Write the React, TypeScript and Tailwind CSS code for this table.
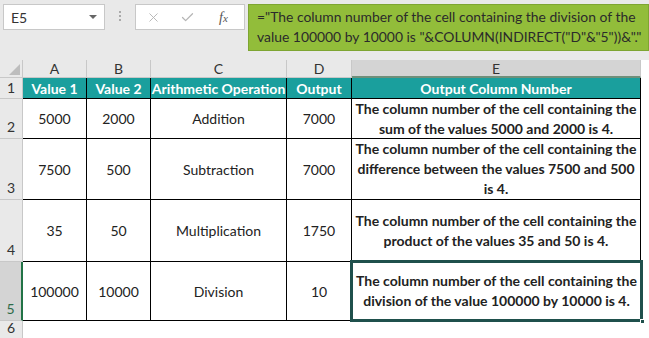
import { Check, X } from 'lucide-react'

const rows = [
  { n: '2', h: 'h-[40px]', a: '5000', b: '2000', op: 'Addition', out: '7000', text: ['The column number of the cell containing the', 'sum of the values 5000 and 2000 is 4.'] },
  { n: '3', h: 'h-[61px]', a: '7500', b: '500', op: 'Subtraction', out: '7000', text: ['The column number of the cell containing the', 'difference between the values 7500 and 500', 'is 4.'] },
  { n: '4', h: 'h-[62px]', a: '35', b: '50', op: 'Multiplication', out: '1750', text: ['The column number of the cell containing the', 'product of the values 35 and 50 is 4.'] },
  { n: '5', h: 'h-[59px]', a: '100000', b: '10000', op: 'Division', out: '10', text: ['The column number of the cell containing the', 'division of the value 100000 by 10000 is 4.'], selected: true },
]

const cols = ['A', 'B', 'C', 'D', 'E']
const widths = ['w-[64px]', 'w-[64px]', 'w-[136px]', 'w-[65px]', 'w-[289px]']

export default function App() {
  return (
    <div className="w-[649px] h-[338px] overflow-hidden bg-white text-[#222] font-['Lato','Noto_Sans',sans-serif]">
      {/* Formula bar */}
      <div className="h-[60px] bg-[#e9e9e9] relative">
        <div className="absolute left-[3px] top-[4px] w-[102px] h-[26px] bg-white border border-[#c8c8c8] flex items-center justify-between px-[7px]">
          <span className="text-[14px] text-[#333]">E5</span>
          <span className="w-0 h-0 border-l-[4px] border-r-[4px] border-t-[4px] border-l-transparent border-r-transparent border-t-[#666]" />
        </div>
        <div className="absolute left-[119px] top-[11px] flex flex-col gap-[2px]">
          <span className="w-[2px] h-[2px] bg-[#aaa]" />
          <span className="w-[2px] h-[2px] bg-[#aaa]" />
          <span className="w-[2px] h-[2px] bg-[#aaa]" />
        </div>
        <div className="absolute left-[135px] top-[4px] w-[110px] h-[26px] bg-white border border-[#c8c8c8] flex items-center px-[10px] gap-[19px]">
          <X className="w-[15px] h-[15px] text-[#b5b5b5]" strokeWidth={1.5} />
          <Check className="w-[15px] h-[15px] text-[#b5b5b5]" strokeWidth={2} />
          <span className="ml-[5px] text-[14px] italic text-[#555] font-['Liberation_Serif',serif]">f<span className="text-[11px]">x</span></span>
        </div>
        <div className="absolute left-[248px] top-[4px] right-0 h-[47px] bg-[#92bd3a] border border-[#7ea532] pl-[8px] pt-[2px] text-[13.9px] leading-[20px] text-[#2b2b2b] whitespace-nowrap">
          <div>="The column number of the cell containing the division of the</div>
          <div>value 100000 by 10000 is "&amp;COLUMN(INDIRECT("D"&amp;"5"))&amp;"."</div>
        </div>
      </div>

      {/* Column headers */}
      <div className="flex h-[18px] bg-[#e9e9e9] text-[14px] text-[#333]">
        <div className="w-[23px] border-r border-b border-[#c8c8c8] relative">
          <span className="absolute right-[2px] bottom-[2px] w-0 h-0 border-l-[11px] border-l-transparent [border-bottom:11px_solid_#bdbdbd]" />
        </div>
        {cols.map((c, i) => (
          <div
            key={c}
            className={`${widths[i]} flex items-center justify-center border-r border-[#c8c8c8] ${c === 'E' ? 'bg-[#d4d4d4] border-b-2 border-b-[#6f8f7a]' : 'border-b border-b-[#c8c8c8]'}`}
          >
            {c}
          </div>
        ))}
        <div className="flex-1 bg-white" />
      </div>

      {/* Row 1 header */}
      <div className="flex h-[21px] text-[14px]">
        <div className="w-[23px] bg-[#e9e9e9] border-r border-b border-[#c8c8c8] flex items-end justify-center text-[14px] text-[#333]">1</div>
        {['Value 1', 'Value 2', 'Arithmetic Operation', 'Output', 'Output Column Number'].map((t, i) => (
          <div key={t} className={`${widths[i]} bg-[#1a9f9d] text-white font-bold flex items-center justify-center border-r border-b border-black whitespace-nowrap`}>
            {t}
          </div>
        ))}
      </div>

      {/* Data rows */}
      {rows.map((r) => (
        <div key={r.n} className={`flex ${r.h} text-[14px]`}>
          <div
            className={`w-[23px] flex items-end justify-center text-[14px] pb-[1px] border-b border-[#c8c8c8] ${r.selected ? 'bg-[#d4d4d4] text-[#2f6b4a] border-r-2 border-r-[#217346]' : 'bg-[#e9e9e9] text-[#333] border-r border-r-[#c8c8c8]'}`}
          >
            {r.n}
          </div>
          {[r.a, r.b, r.op, r.out].map((v, i) => (
            <div key={i} className={`${widths[i]} flex items-center justify-center border-r border-b border-black`}>
              {v}
            </div>
          ))}
          <div className={`${widths[4]} relative flex flex-col items-center justify-center border-b border-black font-bold text-[14px] leading-[20px] ${r.selected ? '' : 'border-r'}`}>
            {r.text.map((l) => (
              <div key={l} className="whitespace-nowrap">{l}</div>
            ))}
            {r.selected && (
              <>
                <span className="absolute -left-[2px] -top-[2px] -right-[2px] -bottom-[2px] border-[3px] border-[#1f504c]" />
                <span className="absolute -right-[4px] -bottom-[4px] w-[5px] h-[5px] bg-[#1f504c] border border-white" />
              </>
            )}
          </div>
        </div>
      ))}

      {/* Row 6 */}
      <div className="flex h-[17px]">
        <div className="w-[23px] bg-[#e9e9e9] border-r border-[#c8c8c8] flex items-end justify-center text-[14px] text-[#333]">6</div>
      </div>
    </div>
  )
}
